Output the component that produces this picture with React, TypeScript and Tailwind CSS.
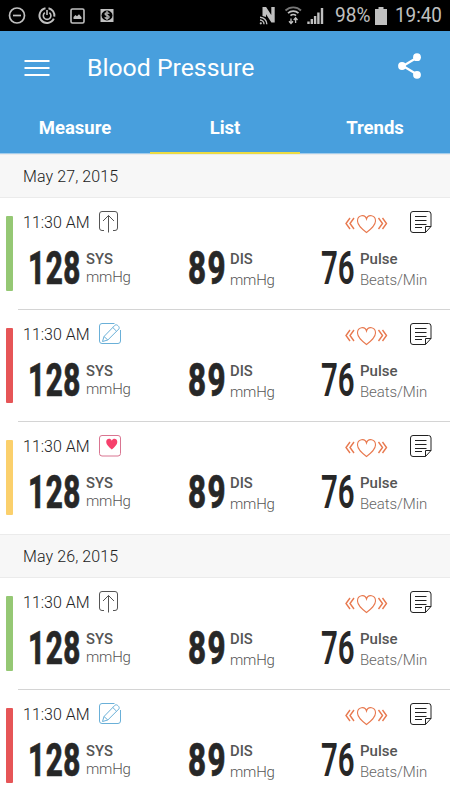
import React from 'react';

type Source = 'upload' | 'manual' | 'heart';

interface Reading {
  bar: string;
  source: Source;
}

const days: { date: string; readings: Reading[] }[] = [
  {
    date: 'May 27, 2015',
    readings: [
      { bar: 'bg-[#95c874]', source: 'upload' },
      { bar: 'bg-[#e65557]', source: 'manual' },
      { bar: 'bg-[#fbd06c]', source: 'heart' },
    ],
  },
  {
    date: 'May 26, 2015',
    readings: [
      { bar: 'bg-[#95c874]', source: 'upload' },
      { bar: 'bg-[#e65557]', source: 'manual' },
    ],
  },
];

function StatusBar() {
  return (
    <div className="flex h-[31px] shrink-0 items-center bg-black text-[#c0c0c0]">
      <svg width="120" height="31" viewBox="0 0 120 31" fill="none" stroke="currentColor">
        <circle cx="17" cy="15.5" r="7.5" strokeWidth="1.7" />
        <path d="M13 15.5h8" strokeWidth="1.7" />
        <path d="M45.5 8.2a7.5 7.5 0 1 0 8.3 10.5M48.5 8.2a7.5 7.5 0 0 1 5.8 8.5" strokeWidth="2" />
        <path d="M44.8 12.6a3.8 3.8 0 1 0 4.6 0M47 10v5" strokeWidth="1.6" />
        <rect x="71" y="9" width="13" height="14" rx="1.5" strokeWidth="1.6" />
        <path d="M73.5 19v-2l2-2 1.5 1.2 2-2 2.5 3V19z" fill="currentColor" stroke="none" />
        <rect x="100.5" y="9" width="13" height="13" fill="currentColor" stroke="none" />
        <ellipse cx="107" cy="15.5" rx="5.5" ry="5" fill="#000" stroke="none" />
        <path d="M109.3 13.6c-1-1.2-4.3-1.2-4.3.4 0 1.8 4.2 1.1 4.2 3 0 1.7-3.5 1.7-4.5.3M107 11v9" strokeWidth="1.2" />
      </svg>
      <svg className="ml-auto" width="72" height="31" viewBox="256 0 72 31" fill="none" stroke="currentColor">
        <path d="M262.5 16V7h3.6l5.2 8V7h3.4v15.5h-3.3L266 14.2V17z" fill="currentColor" stroke="none" />
        <path d="M260 17.2a7 7 0 0 1 6.8 7M260 20a4.2 4.2 0 0 1 4 4.2" strokeWidth="1.4" />
        <circle cx="260.8" cy="23.3" r="1.1" fill="currentColor" stroke="none" />
        <path d="M285.5 10.5a11 11 0 0 1 15.5 0" strokeWidth="1.8" stroke="#777" />
        <path d="M288 13.2a7.5 7.5 0 0 1 10.5 0M290.5 15.7a4 4 0 0 1 5.5 0" strokeWidth="1.7" />
        <path d="M291 23.5v-5M289 21.3l2 2.2 2-2.2M295.6 18v5M293.7 20l1.9-2.2 1.9 2.2" strokeWidth="1.3" />
        <path d="M308.5 24v-2.5M311.8 24v-5M315.1 24v-8M318.4 24V12.5M322 24V8" strokeWidth="2.4" />
      </svg>
      <span className="ml-[7px] w-[36px] text-[20.5px] leading-none">
        <span className="block origin-left scale-x-[0.93] whitespace-nowrap">98%</span>
      </span>
      <svg className="ml-[4px]" width="12" height="18" viewBox="0 0 12 18" fill="currentColor">
        <path d="M3.5 0h5v2H12v16H0V2h3.5z" />
      </svg>
      <span className="ml-[8px] mr-[7px] w-[48px] text-[20.5px] leading-none">
        <span className="block origin-left scale-x-[0.92] whitespace-nowrap">19:40</span>
      </span>
    </div>
  );
}

function Header() {
  return (
    <header className="h-[123px] shrink-0 border-b border-[#a3cdec] bg-[#489fdd] text-white">
      <div className="flex h-[73px] items-center pl-6 pr-[28px]">
        <svg width="26" height="18" viewBox="0 0 26 18" stroke="currentColor" strokeWidth="2">
          <path d="M.5 2h25M.5 9h25M.5 16h25" />
        </svg>
        <h1 className="ml-[37px] mt-px text-[24.8px] font-normal">Blood Pressure</h1>
        <svg className="mb-1 ml-auto" width="24" height="26" viewBox="0 0 24 26" fill="currentColor">
          <path d="M20 4L5 13l15 9" fill="none" stroke="currentColor" strokeWidth="2.2" />
          <circle cx="19" cy="4.2" r="3.9" />
          <circle cx="4" cy="13" r="3.9" />
          <circle cx="19" cy="21.8" r="3.9" />
        </svg>
      </div>
      <nav className="grid h-[50px] grid-cols-3 text-center text-[18.5px] font-bold leading-[48px]">
        <span>Measure</span>
        <span className="h-[50px] border-b-2 border-[#ecdb42]">List</span>
        <span>Trends</span>
      </nav>
    </header>
  );
}

function SourceIcon({ source }: { source: Source }) {
  if (source === 'upload') {
    return (
      <svg width="22" height="22" viewBox="0 0 22 22" fill="none" stroke="#555" strokeWidth="1">
        <path d="M5 19.5H3A2.5 2.5 0 0 1 .5 17V3A2.5 2.5 0 0 1 3 .5h13A2.5 2.5 0 0 1 18.5 3v14a2.5 2.5 0 0 1-2.5 2.5h-2M9.5 21.5V4.5M4 10l5.5-5.5L15 10" />
      </svg>
    );
  }
  if (source === 'manual') {
    return (
      <svg width="22" height="22" viewBox="0 0 22 22" fill="none" stroke="#6ab0d8" strokeWidth="1">
        <path d="M15.5.5H3A2.5 2.5 0 0 0 .5 3v15A2.5 2.5 0 0 0 3 20.5h16a2.5 2.5 0 0 0 2.5-2.5V7" />
        <path d="M3.5 18.5l1.5-5L16 2.2c1.6-1.6 5.5 2 3.8 3.8L8.8 17zM5 13.5L8.8 17M13.8 4.5l3.7 3.7" />
      </svg>
    );
  }
  return (
    <svg width="22" height="22" viewBox="0 0 22 22" fill="none">
      <rect x=".5" y=".5" width="21" height="20.5" rx="2.5" stroke="#d97591" />
      <path d="M12.8 14.5C10 12 7.2 9.8 7.2 7c0-3.800 4.400-4.200 5.600-1.300C14 2.800 18.300 3.200 18.300 7c0 2.800-2.700 5-5.500 7.500z" fill="#f6406c" />
    </svg>
  );
}

function HeartBeat() {
  return (
    <svg width="44" height="20" viewBox="0 0 44 20" fill="none" stroke="#e8794f" strokeWidth="1.4">
      <path d="M6 4L2 9.5 6 15M10 4L6 9.5l4 5.500M34.500 4l4 5.500-4 5.500M38.500 4l4 5.500-4 5.500" />
      <path strokeWidth="1.100" d="M22.500 18.500C18 15 13.500 11.500 13.500 7c0-6 7.500-7.200 9-2 1.500-5.200 9-4 9 2 0 4.500-4.500 8-9 11.500z" />
    </svg>
  );
}

function NoteIcon() {
  return (
    <svg width="22" height="22" viewBox="0 0 22 22" fill="none" stroke="#222" strokeWidth="1">
      <path d="M15.5 21.5H3A2.5 2.5 0 0 1 .5 19V3A2.5 2.5 0 0 1 3 .5h15.500A2.500 2.500 0 0 1 21 3v12.500z" />
      <path d="M15.5 21.5v-6H21M5 5.500h11.500M5 9.500h11.500M5 13.500h11.500M5 16.500h7" />
    </svg>
  );
}

function ReadingRow({ reading, last }: { reading: Reading; last: boolean }) {
  return (
    <div className="flex h-[112px] shrink-0 pl-[6px]">
      <div className={`mt-[18px] h-[75px] w-[7px] shrink-0 rounded-[1px] ${reading.bar}`} />
      <div className={`ml-[5px] flex-1 pl-[5px] ${last ? '' : 'border-b border-[#d4d4d4]'}`}>
        <div className="mt-[13px] flex h-[22px] items-center">
          <span className="mt-[2px] w-[76px] whitespace-nowrap text-[16px] font-light text-[#222]">11:30 AM</span>
          <SourceIcon source={reading.source} />
          <div className="ml-auto mt-[3px]">
            <HeartBeat />
          </div>
          <div className="ml-[22px] mr-[18px]">
            <NoteIcon />
          </div>
        </div>
        <div className="mt-[12px] flex text-[#272727]">
          <div className="flex w-[165px]">
            <div className="ml-[5px] w-[58px] text-[46px] font-extrabold leading-[46px] tracking-[0.8px]">
              <span className="block origin-left scale-x-[0.645] [-webkit-text-stroke:0.7px_#272727]">128</span>
            </div>
            <div className="pt-[5px] text-[15px] leading-[18px]">
              <div className="text-[14.8px] font-medium text-[#555]">SYS</div>
              <div className="font-light text-[#555]"><span className="tracking-[-0.2px]">mmHg</span></div>
            </div>
          </div>
          <div className="flex w-[132px]">
            <div className="w-[42px] text-[46px] font-extrabold leading-[46px] tracking-[2px]">
              <span className="block origin-left scale-x-[0.68] [-webkit-text-stroke:0.7px_#272727]">89</span>
            </div>
            <div className="pt-[5px] text-[15px] leading-[18px]">
              <div className="text-[14.8px] font-medium text-[#555]">DIS</div>
              <div className="mt-[3px] font-light tracking-[-0.2px] text-[#555]">mmHg</div>
            </div>
          </div>
          <div className="flex">
            <div className="w-[40px] pl-px text-[46px] font-semibold leading-[46px]">
              <span className="block origin-left scale-x-[0.64]">76</span>
            </div>
            <div className="pt-[5px] text-[15px] leading-[18px]">
              <div className="font-medium text-[#555]">Pulse</div>
              <div className="mt-[3px] whitespace-nowrap font-light tracking-[-0.1px] text-[#666]">Beats/Min</div>
            </div>
          </div>
        </div>
      </div>
    </div>
  );
}

export default function App() {
  return (
    <div className="flex h-[800px] w-[450px] flex-col overflow-hidden bg-white font-['Roboto',sans-serif]">
      <StatusBar />
      <Header />
      {days.map((day) => (
        <section key={day.date} className="shrink-0">
          <h2 className="h-[44px] border-y border-[#ebebeb] bg-[#f7f7f7] pl-[23px] text-[16px] font-light leading-[44px] tracking-[0.1px] text-[#222]">
            {day.date}
          </h2>
          {day.readings.map((reading, i) => (
            <ReadingRow key={i} reading={reading} last={i === day.readings.length - 1} />
          ))}
        </section>
      ))}
    </div>
  );
}
